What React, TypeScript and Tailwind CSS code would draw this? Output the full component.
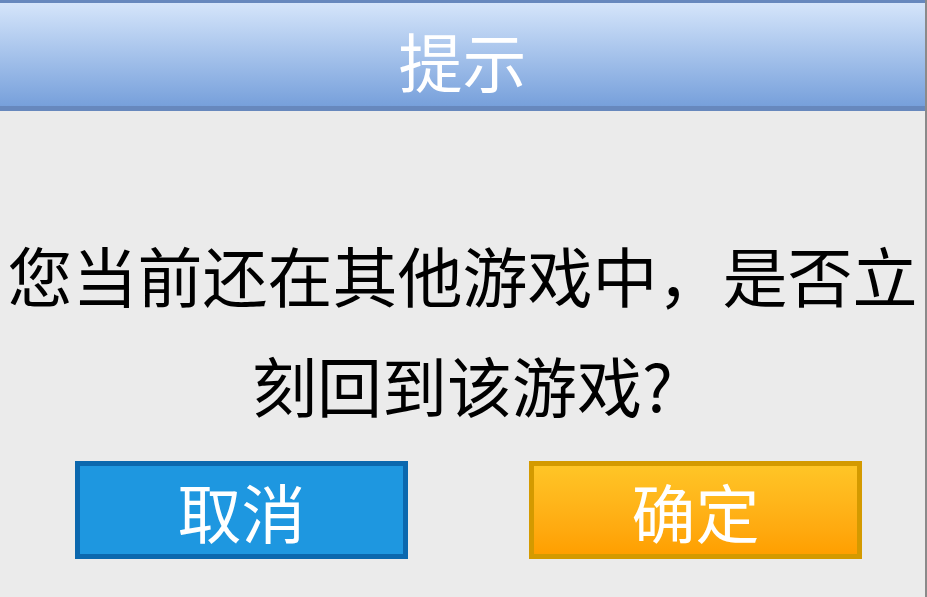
import React from 'react'

const CJK = "font-['Noto_Sans_CJK_SC','Noto_Sans',sans-serif]"

export default function App() {
  return (
    <div className={`w-[927px] h-[597px] overflow-hidden bg-[#ebebeb] border-r-2 border-[#8a8a8a] ${CJK}`}>
      {/* Title bar */}
      <header className="h-[111px] pt-[9px] border-t-[3px] border-b-[5px] border-[#6788bd] bg-gradient-to-b from-[#d5e5fa] to-[#77a0db] flex items-center justify-center">
        <h1 className="text-[64px] leading-none text-white font-normal">提示</h1>
      </header>

      {/* Message */}
      <div className="mt-[108px] text-center text-black text-[65px] leading-[110px]">
        <p>您当前还在其他游戏中，是否立</p>
        <p>刻回到该游戏?</p>
      </div>

      {/* Actions */}
      <div className="mt-[22px] flex justify-between pl-[75px] pr-[63px]">
        <button className="w-[333px] h-[98px] border-[5px] border-[#0b68ae] bg-[#1e97e0] text-white text-[64px] leading-none flex items-center justify-center">
          取消
        </button>
        <button className="w-[333px] h-[98px] border-[5px] border-[#d49a00] bg-gradient-to-b from-[#ffc526] to-[#ff9f00] text-white text-[64px] leading-none flex items-center justify-center">
          确定
        </button>
      </div>
    </div>
  )
}
